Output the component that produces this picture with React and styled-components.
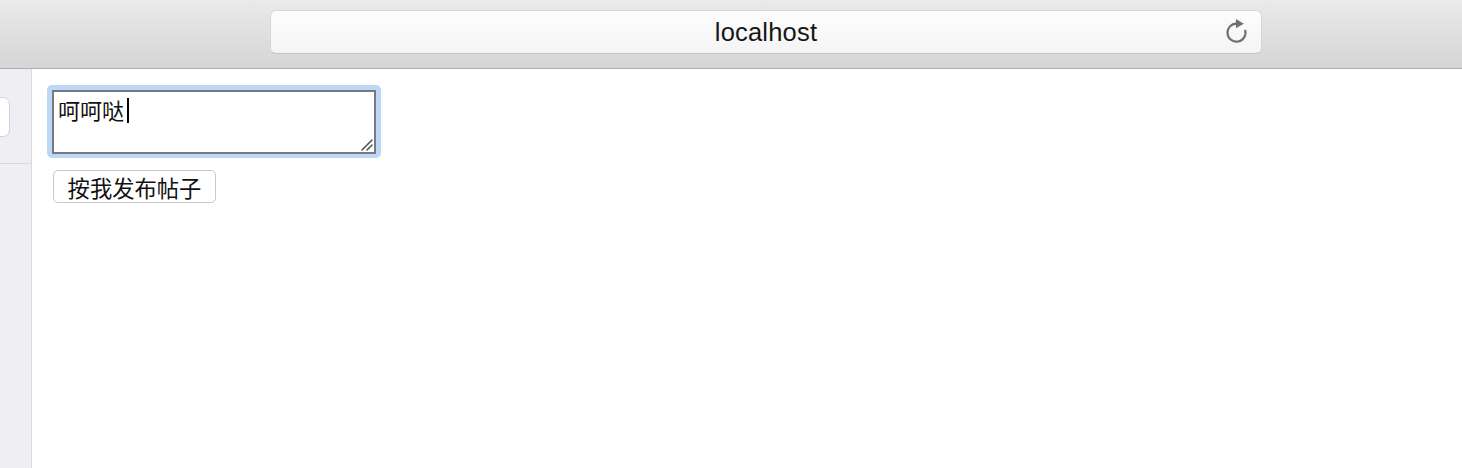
import React from 'react';
import styled, { createGlobalStyle } from 'styled-components';

const GlobalStyle = createGlobalStyle`
  html, body {
    margin: 0;
    padding: 0;
    height: 468px;
    overflow: hidden;
    background: #fff;
    font-family: "Liberation Sans", "Noto Sans CJK SC", sans-serif;
  }
`;

const Window = styled.div`
  display: flex;
  flex-direction: column;
  height: 468px;
`;

const Toolbar = styled.div`
  height: 69px;
  flex-shrink: 0;
  box-sizing: border-box;
  padding: 10px 0 0 270px;
  background: linear-gradient(#eaeaea, #d5d5d5);
  border-bottom: 1px solid #afafaf;
`;

const AddressBar = styled.div`
  position: relative;
  width: 992px;
  height: 44px;
  box-sizing: border-box;
  display: flex;
  align-items: center;
  justify-content: center;
  background: linear-gradient(#fdfdfd, #f4f4f4);
  border: 1px solid #d6d6d6;
  border-bottom-color: #c4c4c4;
  border-radius: 6px;
`;

const Url = styled.span`
  font-family: "Liberation Sans", Arial, sans-serif;
  font-size: 25.5px;
  color: #161616;
  letter-spacing: 0.2px;
`;

const ReloadButton = styled.svg`
  position: absolute;
  right: 11px;
  top: 7px;
  width: 27px;
  height: 27px;
`;

const Body = styled.div`
  flex: 1;
  display: flex;
  min-height: 0;
`;

const Sidebar = styled.div`
  width: 31px;
  flex-shrink: 0;
  background: #efeff3;
  border-right: 1px solid #dadade;
  overflow: hidden;
`;

const SidebarHeader = styled.div`
  height: 95px;
  box-sizing: border-box;
  padding-top: 28px;
  border-bottom: 1px solid #d9d9dd;
`;

const SidebarCard = styled.div`
  width: 20px;
  height: 40px;
  margin-left: -10px;
  box-sizing: border-box;
  background: #fff;
  border: 1px solid #d2d2d6;
  border-radius: 7px;
`;

const Main = styled.div`
  flex: 1;
  display: flex;
  flex-direction: column;
  align-items: flex-start;
  gap: 12px;
  padding: 16px 0 0 15px;
`;

const FocusRing = styled.div`
  position: relative;
  display: flex;
  padding: 5px 5px 4px;
  background: #bcd8f6;
  border-radius: 5px;
`;

const Editor = styled.textarea`
  width: 324px;
  height: 64px;
  box-sizing: border-box;
  margin: 0;
  padding: 4px 4px;
  border: 2px solid #777a7c;
  border-radius: 0;
  outline: none;
  background: #fff;
  color: #111;
  caret-color: transparent;
  font-family: "Noto Sans CJK SC", sans-serif;
  font-size: 22px;
  line-height: 26px;
  resize: none;
`;

const Caret = styled.span`
  position: absolute;
  left: 80px;
  top: 13px;
  width: 2px;
  height: 25px;
  background: #000;
`;

const ResizeGrip = styled.svg`
  position: absolute;
  right: 8px;
  bottom: 7px;
  width: 12px;
  height: 12px;
  pointer-events: none;
`;

const PostButton = styled.button`
  margin-left: 6px;
  width: 163px;
  height: 33px;
  box-sizing: border-box;
  padding: 0;
  background: #fff;
  border: 1px solid #c9c9c9;
  border-radius: 5px;
  color: #111;
  font-family: "Noto Sans CJK SC", sans-serif;
  font-size: 22.3px;
  line-height: 28px;
`;

const App = () => {
  return (
    <>
      <GlobalStyle />
      <Window>
        <Toolbar>
          <AddressBar>
            <Url>localhost</Url>
            <ReloadButton viewBox="0 0 24 24">
              <path
                d="M12 5 A8 8 0 1 0 19.6 10.5"
                fill="none"
                stroke="#707070"
                strokeWidth="1.9"
              />
              <polygon points="11.5,0.8 18.5,5 11.5,9.2" fill="#707070" />
            </ReloadButton>
          </AddressBar>
        </Toolbar>
        <Body>
          <Sidebar>
            <SidebarHeader>
              <SidebarCard />
            </SidebarHeader>
          </Sidebar>
          <Main>
            <FocusRing>
              <Editor defaultValue="呵呵哒" readOnly />
              <Caret />
              <ResizeGrip viewBox="0 0 12 12">
                <path d="M1 11 L11 1 M6 11 L11 6" stroke="#555" strokeWidth="1.6" strokeLinecap="round" />
              </ResizeGrip>
            </FocusRing>
            <PostButton>按我发布帖子</PostButton>
          </Main>
        </Body>
      </Window>
    </>
  );
};

export default App;
